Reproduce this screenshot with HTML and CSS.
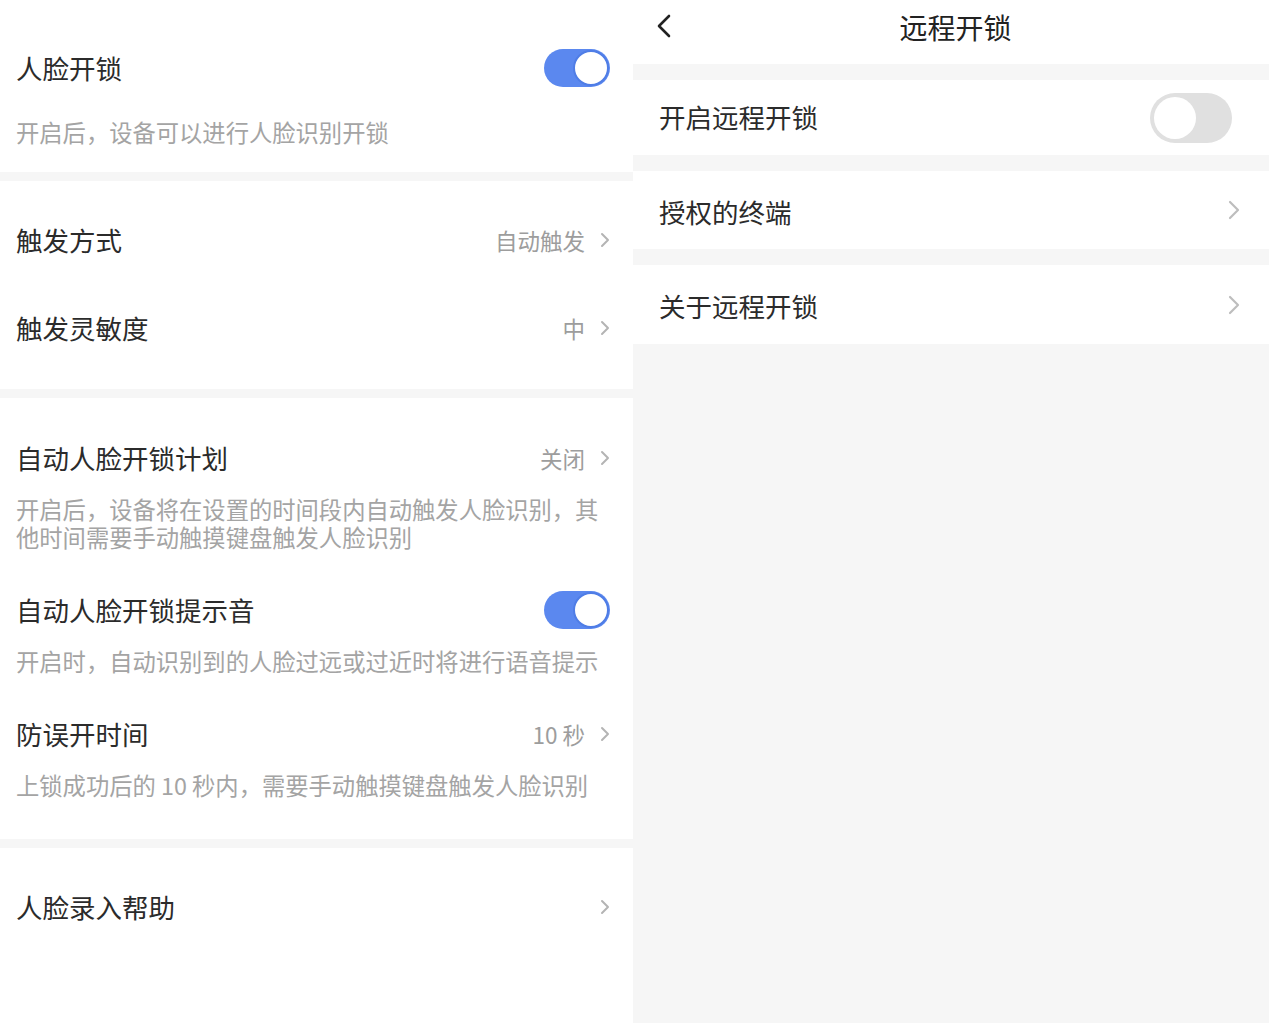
FILE: index.html
```html
<!DOCTYPE html>
<html lang="zh-CN">
<head>
<meta charset="utf-8">
<title>人脸开锁 / 远程开锁</title>
<link rel="stylesheet" href="styles.css">
</head>
<body>
<div class="page">
  <div class="left">
    <section class="sec sec-a">
      <div class="row">
        <span class="title">人脸开锁</span>
        <span class="switch on"><span class="knob"></span></span>
      </div>
      <p class="desc desc-a">开启后，设备可以进行人脸识别开锁</p>
    </section>
    <section class="sec sec-b">
      <div class="row tall">
        <span class="title">触发方式</span>
        <span class="value">自动触发<svg class="chev" width="10" height="16" viewBox="0 0 10 16"><path d="M2 2 L8 8 L2 14"/></svg></span>
      </div>
      <div class="row tall">
        <span class="title">触发灵敏度</span>
        <span class="value">中<svg class="chev" width="10" height="16" viewBox="0 0 10 16"><path d="M2 2 L8 8 L2 14"/></svg></span>
      </div>
    </section>
    <section class="sec sec-c">
      <div class="row mid">
        <span class="title">自动人脸开锁计划</span>
        <span class="value">关闭<svg class="chev" width="10" height="16" viewBox="0 0 10 16"><path d="M2 2 L8 8 L2 14"/></svg></span>
      </div>
      <p class="desc">开启后，设备将在设置的时间段内自动触发人脸识别，其他时间需要手动触摸键盘触发人脸识别</p>
      <div class="row mid gap">
        <span class="title">自动人脸开锁提示音</span>
        <span class="switch on"><span class="knob"></span></span>
      </div>
      <p class="desc">开启时，自动识别到的人脸过远或过近时将进行语音提示</p>
      <div class="row mid gap">
        <span class="title">防误开时间</span>
        <span class="value">10 秒<svg class="chev" width="10" height="16" viewBox="0 0 10 16"><path d="M2 2 L8 8 L2 14"/></svg></span>
      </div>
      <p class="desc">上锁成功后的 10 秒内，需要手动触摸键盘触发人脸识别</p>
    </section>
    <section class="sec sec-d">
      <div class="row tall">
        <span class="title">人脸录入帮助</span>
        <span class="value"><svg class="chev" width="10" height="16" viewBox="0 0 10 16"><path d="M2 2 L8 8 L2 14"/></svg></span>
      </div>
    </section>
  </div>
  <div class="right">
    <header class="nav">
      <svg class="back" width="16" height="24" viewBox="0 0 16 24"><path d="M13 2 L3 12 L13 22"/></svg>
      <span class="nav-title">远程开锁</span>
    </header>
    <div class="r-row r-first">
      <span class="r-title">开启远程开锁</span>
      <span class="switch off"><span class="knob"></span></span>
    </div>
    <div class="r-row r-second">
      <span class="r-title">授权的终端</span>
      <svg class="r-chev" width="12" height="20" viewBox="0 0 12 20"><path d="M2 2 L10 10 L2 18"/></svg>
    </div>
    <div class="r-row r-third">
      <span class="r-title">关于远程开锁</span>
      <svg class="r-chev" width="12" height="20" viewBox="0 0 12 20"><path d="M2 2 L10 10 L2 18"/></svg>
    </div>
  </div>
</div>
</body>
</html>
```
FILE: styles.css
```css
* { box-sizing: border-box; }
html, body { margin: 0; padding: 0; }
body {
  font-family: "Noto Sans CJK SC", "Noto Sans", sans-serif;
  color: #333;
  background: #f6f6f6;
}
.page {
  display: flex;
  width: 1269px;
  height: 1023px;
  overflow: hidden;
}
.left {
  width: 633px;
  flex: none;
  display: flex;
  flex-direction: column;
  gap: 9px;
  background: #f6f6f6;
}
.sec {
  background: #fff;
  padding: 0 23px 0 16px;
}
.sec-a { padding-top: 28px; padding-bottom: 23px; height: 172px; }
.sec-b { padding-top: 15px; padding-bottom: 16px; height: 208px; }
.sec-c { padding-top: 30px; height: 441px; }
.sec-d { padding-top: 15px; flex: 1; }
.row {
  display: flex;
  align-items: center;
  justify-content: space-between;
  height: 80px;
}
.row.tall { height: 88px; }
.row.mid { height: 60px; }
.row.gap { margin-top: 29px; }
.title {
  font-size: 26.5px;
  color: #2b2b2b;
  line-height: 1;
}
.value {
  display: flex;
  align-items: center;
  gap: 15px;
  font-size: 22.5px;
  color: #9d9d9d;
  line-height: 1;
}
.chev path {
  fill: none;
  stroke: #b4b4b4;
  stroke-width: 2;
  stroke-linecap: round;
  stroke-linejoin: round;
}
.desc {
  margin: 7px 0 0;
  max-width: 595px;
  font-size: 23.3px;
  line-height: 28px;
  color: #a4a4a4;
}
.desc-a { margin-top: 8px; line-height: 32px; }
.switch {
  display: flex;
  align-items: center;
  flex: none;
  border-radius: 999px;
}
.switch.on {
  width: 66px;
  height: 38px;
  padding: 1px;
  background: #5b88ef;
  justify-content: flex-end;
}
.switch.on .knob {
  width: 36px;
  height: 36px;
  border-radius: 50%;
  background: #fff;
  border: 2px solid #4f7de6;
}
.switch.off {
  width: 82px;
  height: 50px;
  padding: 4px;
  background: #e0e0e0;
  justify-content: flex-start;
}
.switch.off .knob {
  width: 42px;
  height: 42px;
  border-radius: 50%;
  background: #fff;
}
.right {
  flex: 1;
  display: flex;
  flex-direction: column;
  gap: 16px;
  background: #f6f6f6;
}
.nav {
  height: 64px;
  background: #fff;
  display: flex;
  align-items: flex-start;
  padding: 14px 0 0 23px;
}
.back path {
  fill: none;
  stroke: #222;
  stroke-width: 2.6;
  stroke-linecap: round;
  stroke-linejoin: round;
}
.nav-title {
  flex: 1;
  text-align: center;
  font-size: 28px;
  line-height: 26px;
  color: #222;
  padding-right: 30px;
}
.r-row {
  background: #fff;
  display: flex;
  align-items: center;
  justify-content: space-between;
  padding: 0 29px 0 26px;
}
.r-first { height: 75px; padding-right: 37px; }
.r-second { height: 78px; }
.r-third { height: 79px; }
.r-title {
  font-size: 26.5px;
  line-height: 1;
  color: #2b2b2b;
}
.r-second .r-title, .r-third .r-title { padding-top: 4px; }
.r-chev path {
  fill: none;
  stroke: #bdbdbd;
  stroke-width: 2.2;
  stroke-linecap: round;
  stroke-linejoin: round;
}
```
